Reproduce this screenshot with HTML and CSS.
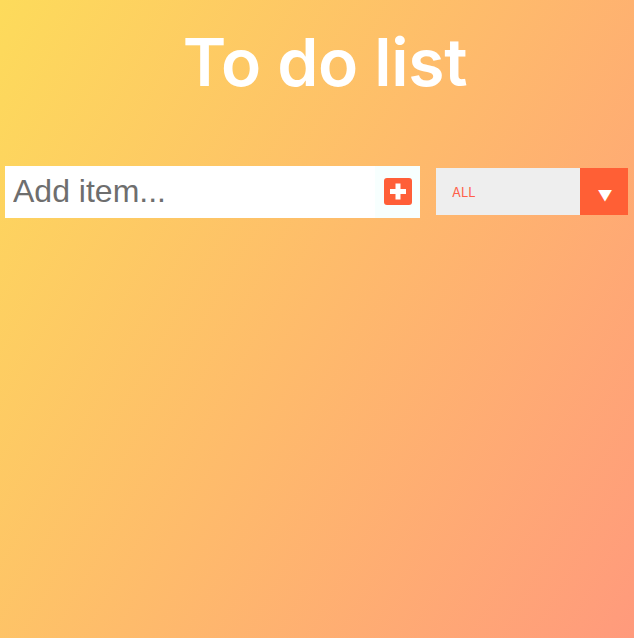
FILE: index.html
```
<!DOCTYPE html>
<html lang="en">
<head>
<meta charset="utf-8">
<title>To do list</title>
<link rel="stylesheet" href="styles.css">
</head>
<body>
<header class="header">
  <h1 class="title">To do list</h1>
</header>
<form class="form" onsubmit="return false">
  <div class="add">
    <input class="add-input" type="text" placeholder="Add item...">
    <button class="add-button" type="submit" aria-label="Add">
      <svg width="28" height="28" viewBox="0 0 28 28" aria-hidden="true">
        <rect x="0" y="0" width="28" height="27" rx="3" fill="#ff5f38"/>
        <rect x="11.5" y="5.5" width="5" height="16" fill="#fff"/>
        <rect x="6" y="11" width="16" height="5" fill="#fff"/>
      </svg>
    </button>
  </div>
  <div class="filter">
    <select class="filter-select" name="todos">
      <option>ALL</option>
      <option>COMPLETED</option>
      <option>UNCOMPLETED</option>
    </select>
    <span class="filter-arrow">&#9660;</span>
  </div>
</form>
</body>
</html>
```
FILE: styles.css
```
* {
  box-sizing: border-box;
}

html, body {
  margin: 0;
  padding: 0;
}

body {
  min-height: 100vh;
  background-image: linear-gradient(120deg, #fddb5b 0%, #ff9a7c 100%);
  color: #fff;
  font-family: Inter, "Open Sans", sans-serif;
}

.header {
  height: 128px;
  display: flex;
  justify-content: center;
  align-items: center;
  padding-left: 16px;
  padding-bottom: 4px;
}

.title {
  margin: 0;
  font-size: 66px;
  font-weight: 600;
  letter-spacing: -0.3px;
}

.form {
  height: 127px;
  display: flex;
  justify-content: center;
  align-items: center;
  gap: 16px;
  padding-right: 1px;
}

.add {
  display: flex;
  height: 52px;
  background: #fff;
}

.add-input {
  width: 370px;
  border: none;
  outline: none;
  padding: 0 8px;
  font-family: "Liberation Sans", Arial, sans-serif;
  font-size: 32px;
  color: #333;
  background: #fff;
}

.add-input::placeholder {
  color: #6e6e6e;
}

.add-button {
  width: 45px;
  border: none;
  padding: 0;
  background: #f7fffe;
  display: flex;
  align-items: center;
  justify-content: center;
  cursor: pointer;
}

.add-button svg {
  display: block;
}

.filter {
  display: flex;
  height: 47px;
}

.filter-select {
  appearance: none;
  -webkit-appearance: none;
  width: 144px;
  height: 47px;
  border: none;
  outline: none;
  border-radius: 0;
  padding: 0 16px;
  background: #eeeeee;
  color: #ff5f4a;
  font-family: Inter, "Open Sans", sans-serif;
  font-size: 13px;
}

.filter-arrow {
  width: 48px;
  background: #ff5f35;
  color: #fff;
  font-size: 15px;
  display: flex;
  justify-content: center;
  align-items: center;
  padding-top: 8px;
  padding-left: 2px;
}
```
